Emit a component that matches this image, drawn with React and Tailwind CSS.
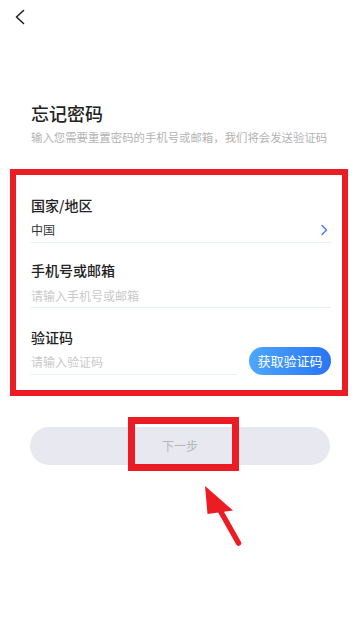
import React from 'react';

// Forgot-password screen with the red annotation boxes + arrow from the guide screenshot.
const Field = ({ label, className = '', children }) => (
    <div className={className}>
        <div className="text-[14px] leading-[20px] font-medium text-[#222]">{label}</div>
        {children}
    </div>
);

const App = () => {
    return (
        <div
            className="relative w-[360px] h-[618px] bg-white overflow-hidden"
            style={{ fontFamily: '"Noto Sans CJK SC", "Noto Sans", sans-serif' }}
        >
            <div className="h-[36px] pl-[14px] pt-[9px]">
                <svg width="12" height="16" viewBox="0 0 12 16" fill="none">
                    <polyline points="9.5,1.5 2.5,8 9.5,14.5" stroke="#222" strokeWidth="1.6" strokeLinecap="round" strokeLinejoin="round" />
                </svg>
            </div>

            <div className="px-[31px] mt-[65px]">
                <h1 className="text-[18px] leading-[24px] font-medium text-[#222]">忘记密码</h1>
                <p className="mt-[4px] text-[11.4px] leading-[16px] text-[#b3b3b3] whitespace-nowrap">
                    输入您需要重置密码的手机号或邮箱，我们将会发送验证码
                </p>
            </div>

            <div className="mt-[24px] ml-[10px] w-[338px] border-[6px] border-[#ec1c24] pl-[15px] pr-[11px] pt-[20px] pb-[15px]">
                <Field label="国家/地区">
                    <div className="mt-[6px] flex items-center justify-between pb-[3px] border-b border-[#e6edfb]">
                        <span className="text-[12px] leading-[18px] text-[#333]">中国</span>
                        <svg width="8" height="12" viewBox="0 0 8 12" fill="none" className="mr-[3px]">
                            <polyline points="2,1.5 6.5,6 2,10.5" stroke="#3a7cf5" strokeWidth="1.4" strokeLinecap="round" strokeLinejoin="round" />
                        </svg>
                    </div>
                </Field>

                <Field label="手机号或邮箱" className="mt-[17px]">
                    <div className="mt-[7px] pb-[2px] border-b border-[#e6edfb] text-[12px] leading-[18px] text-[#c9c9c9]">
                        请输入手机号或邮箱
                    </div>
                </Field>

                <Field label="验证码" className="mt-[19px]">
                    <div className="flex items-end justify-between">
                        <div className="w-[206px] pb-[3px] border-b border-[#e6edfb] text-[12px] leading-[18px] text-[#c9c9c9]">
                            请输入验证码
                        </div>
                        <button className="w-[82px] h-[28px] rounded-full bg-gradient-to-r from-[#4ea7fb] to-[#2a74f4] text-white text-[13px] leading-[28px]">
                            获取验证码
                        </button>
                    </div>
                </Field>
            </div>

            <div className="relative mt-[31px] mx-[30px] h-[38px] rounded-full bg-[#e8e9f0] flex items-center justify-center">
                <span className="text-[12px] text-[#b6b6b8]">下一步</span>
                <div className="absolute left-[98px] top-[-10px] w-[111px] h-[54px] border-[7px] border-[#ec1c24]" />
            </div>

            <svg className="absolute left-0 top-0" width="360" height="618" viewBox="0 0 360 618">
                <polygon points="205,486 207.5,514 233,510.5" fill="#ec1c24" />
                <line x1="221" y1="512" x2="238.5" y2="543" stroke="#ec1c24" strokeWidth="5.5" strokeLinecap="round" />
            </svg>
        </div>
    );
};

export default App;
